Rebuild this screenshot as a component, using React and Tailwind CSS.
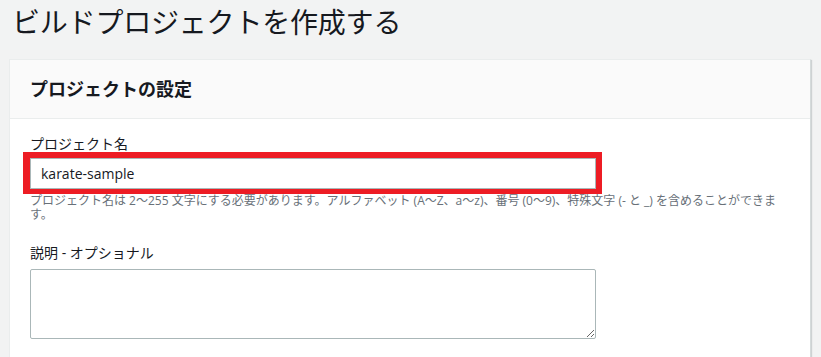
export default function App() {
  const font = { fontFamily: '"Open Sans", "Noto Sans CJK JP", sans-serif' };
  return (
    <div className="w-[821px] h-[357px] overflow-hidden bg-[#f2f3f3] text-[#16191f]" style={font}>
      <h1 className="pl-[12px] text-[28px] leading-[44px] font-normal tracking-[-0.2px]">ビルドプロジェクトを作成する</h1>
      <div className="ml-[9px] mt-[15px] w-[802px] bg-white border border-[#eaeded] border-r-[#d5dbdb] shadow-[1px_1px_1px_0_rgba(0,28,36,0.15)]">
        <div className="h-[59px] bg-[#fafafa] border-b border-[#eaeded] flex items-center pl-[20px]">
          <h2 className="text-[18px] font-bold leading-[22px]">プロジェクトの設定</h2>
        </div>
        <div className="pl-[20px] pr-[20px] pt-[15px] pb-[40px]">
          <div className="text-[14px] leading-[20px]">プロジェクト名</div>
          <div className="-ml-[7px] mt-[-2px] w-[579px] border-l-[7px] border-r-[6px] border-t-[6px] border-b-[5px] border-[#ed1c24]">
            <div className="h-[31px] border border-[#aab7b8] flex items-center pl-[10px] text-[14px] bg-white">
              karate-sample
            </div>
          </div>
          <p className="text-[12px] leading-[14px] text-[#687078]">
            プロジェクト名は 2〜255 文字にする必要があります。アルファベット (A〜Z、a〜z)、番号 (0〜9)、特殊文字 (- と _) を含めることができます。
          </p>
          <div className="mt-[21px] text-[14px] leading-[20px]">説明 - オプショナル</div>
          <textarea className="mt-[6px] block w-[566px] h-[70px] border border-[#aab7b8] rounded-[2px] bg-white" />
        </div>
      </div>
    </div>
  );
}
